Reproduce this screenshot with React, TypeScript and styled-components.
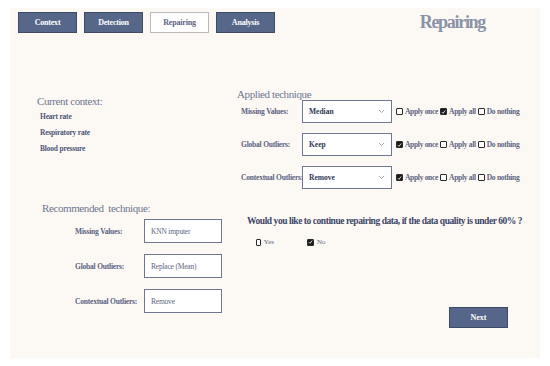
import styled, { createGlobalStyle } from 'styled-components'

const GlobalStyle = createGlobalStyle`
  body {
    margin: 0;
    background: #ffffff;
    font-family: "Liberation Serif", "Times New Roman", serif;
  }
`

const contextItems = ['Heart rate', 'Respiratory rate', 'Blood pressure']

const applied = [
  { label: 'Missing Values:', value: 'Median', checked: 1 },
  { label: 'Global Outliers:', value: 'Keep', checked: 0 },
  { label: 'Contextual Outliers:', value: 'Remove', checked: 0 },
]

const recommended = [
  { label: 'Missing Values:', value: 'KNN imputer' },
  { label: 'Global Outliers:', value: 'Replace (Mean)' },
  { label: 'Contextual Outliers:', value: 'Remove' },
]

const options = ['Apply once', 'Apply all', 'Do nothing']

function Check({ checked }: { checked?: boolean }) {
  return (
    <Box $checked={checked}>
      {checked && (
        <svg width='6' height='6' viewBox='0 0 6 6'>
          <path d='M1 3.2 L2.4 4.6 L5 1.2' stroke='#fff' strokeWidth='1' fill='none' />
        </svg>
      )}
    </Box>
  )
}

function App() {
  return (
    <>
      <GlobalStyle />
      <Panel>
        <Header>
          <Tab>Context</Tab>
          <Tab>Detection</Tab>
          <Tab $active>Repairing</Tab>
          <Tab>Analysis</Tab>
          <Title>Repairing</Title>
        </Header>
        <Body>
          <LeftColumn>
            <SectionTitle>Current context:</SectionTitle>
            <ContextList>
              {contextItems.map((c) => (
                <ContextItem key={c}>{c}</ContextItem>
              ))}
            </ContextList>
            <RecTitle>Recommended&nbsp; technique:</RecTitle>
            <RecList>
              {recommended.map((r) => (
                <RecRow key={r.label}>
                  <Label>{r.label}</Label>
                  <RecBox>{r.value}</RecBox>
                </RecRow>
              ))}
            </RecList>
          </LeftColumn>
          <RightColumn>
            <SectionTitle>Applied technique</SectionTitle>
            <AppliedList>
              {applied.map((a) => (
                <AppliedRow key={a.label}>
                  <RowLabel>{a.label}</RowLabel>
                  <Select>
                    {a.value}
                    <svg width='7' height='5' viewBox='0 0 7 5'>
                      <path d='M1 1 L3.5 3.5 L6 1' stroke='#8a90a2' strokeWidth='0.8' fill='none' />
                    </svg>
                  </Select>
                  <Options>
                    {options.map((o, i) => (
                      <Option key={o}>
                        <Check checked={i === a.checked} />
                        {o}
                      </Option>
                    ))}
                  </Options>
                </AppliedRow>
              ))}
            </AppliedList>
            <Question>Would you like to continue repairing data, if the data quality is under 60% ?</Question>
            <Answers>
              <Answer>
                <Check />
                Yes
              </Answer>
              <Answer>
                <Check checked />
                No
              </Answer>
            </Answers>
            <NextButton>Next</NextButton>
          </RightColumn>
        </Body>
      </Panel>
    </>
  )
}

const Panel = styled.div`
  margin: 8px 10px;
  width: 530px;
  height: 350px;
  box-sizing: border-box;
  padding: 4px 8px 0 8px;
  background: #fcf9f5;
`

const Header = styled.div`
  display: flex;
  align-items: center;
  gap: 7px;
  height: 21px;
`

const Tab = styled.div<{ $active?: boolean }>`
  width: 59px;
  height: 21px;
  box-sizing: border-box;
  display: flex;
  align-items: center;
  justify-content: center;
  font-size: 8px;
  font-weight: bold;
  letter-spacing: -0.2px;
  color: ${(p) => (p.$active ? '#5c6585' : '#ffffff')};
  background: ${(p) => (p.$active ? '#ffffff' : '#57678a')};
  border: 1px solid ${(p) => (p.$active ? '#b9b9b9' : '#3f4a65')};
`

const Title = styled.div`
  margin-left: auto;
  margin-right: 47px;
  font-size: 18px;
  font-weight: bold;
  letter-spacing: -1.3px;
  color: #8a92a8;
`

const Body = styled.div`
  display: grid;
  grid-template-columns: 219px 1fr;
  margin-top: 55px;
`

const LeftColumn = styled.div`
  display: flex;
  flex-direction: column;
  padding-left: 19px;
  padding-top: 7px;
`

const RightColumn = styled.div`
  display: flex;
  flex-direction: column;
`

const SectionTitle = styled.div`
  font-size: 11px;
  line-height: 13px;
  letter-spacing: -0.4px;
  color: #6f7690;
`

const ContextList = styled.div`
  display: flex;
  flex-direction: column;
  padding-left: 3px;
  margin-top: 1px;
`

const ContextItem = styled.div`
  font-size: 7.5px;
  line-height: 16px;
  font-weight: bold;
  letter-spacing: -0.2px;
  color: #4d5677;
`

const RecTitle = styled(SectionTitle)`
  margin-top: 45px;
  padding-left: 5px;
`

const RecList = styled.div`
  display: flex;
  flex-direction: column;
  gap: 11px;
  margin-top: 4px;
  padding-left: 38px;
`

const RecRow = styled.div`
  display: grid;
  grid-template-columns: 69px 78px;
  align-items: center;
`

const Label = styled.div`
  font-size: 7.5px;
  font-weight: bold;
  letter-spacing: -0.2px;
  color: #5a6282;
  white-space: nowrap;
`

const RecBox = styled.div`
  height: 24px;
  box-sizing: border-box;
  border: 1px solid #6e7692;
  background: #ffffff;
  display: flex;
  align-items: center;
  padding-left: 6px;
  font-size: 7.5px;
  letter-spacing: -0.2px;
  color: #5d6582;
`

const AppliedList = styled.div`
  display: flex;
  flex-direction: column;
  gap: 10px;
  margin-top: -1px;
`

const AppliedRow = styled.div`
  display: flex;
  align-items: center;
  padding-left: 4px;
`

const RowLabel = styled(Label)`
  width: 61px;
`

const Select = styled.div`
  width: 90px;
  height: 23px;
  box-sizing: border-box;
  border: 1px solid #6e7692;
  background: #ffffff;
  display: flex;
  align-items: center;
  justify-content: space-between;
  padding: 0 6px 0 6px;
  font-size: 7.5px;
  font-weight: bold;
  color: #2f3756;
`

const Options = styled.div`
  display: flex;
  align-items: center;
  margin-left: 4px;
`

const Option = styled.div`
  display: flex;
  align-items: center;
  gap: 2px;
  margin-right: 2px;
  font-size: 7.5px;
  font-weight: bold;
  letter-spacing: -0.3px;
  color: #5c6480;
  white-space: nowrap;
`

const Box = styled.span<{ $checked?: boolean }>`
  width: 7px;
  height: 7px;
  box-sizing: border-box;
  display: inline-flex;
  align-items: center;
  justify-content: center;
  border: 1px solid #2a2a2a;
  border-radius: 1px;
  background: ${(p) => (p.$checked ? '#1c1c1c' : '#ffffff')};
`

const Question = styled.div`
  margin-top: 27px;
  padding-left: 10px;
  font-size: 9.5px;
  font-weight: bold;
  letter-spacing: -0.45px;
  color: #3d4566;
  white-space: nowrap;
`

const Answers = styled.div`
  display: flex;
  align-items: center;
  gap: 33px;
  margin-top: 12px;
  padding-left: 19px;
`

const Answer = styled.div`
  display: flex;
  align-items: center;
  gap: 3px;
  width: 18px;
  font-size: 7px;
  color: #5c6480;
`

const NextButton = styled.div`
  align-self: flex-start;
  margin-left: 212px;
  margin-top: 61px;
  width: 59px;
  height: 21px;
  box-sizing: border-box;
  display: flex;
  align-items: center;
  justify-content: center;
  background: #56658a;
  border: 1px solid #3e4a66;
  color: #ffffff;
  font-size: 8px;
  font-weight: bold;
`

export default App
